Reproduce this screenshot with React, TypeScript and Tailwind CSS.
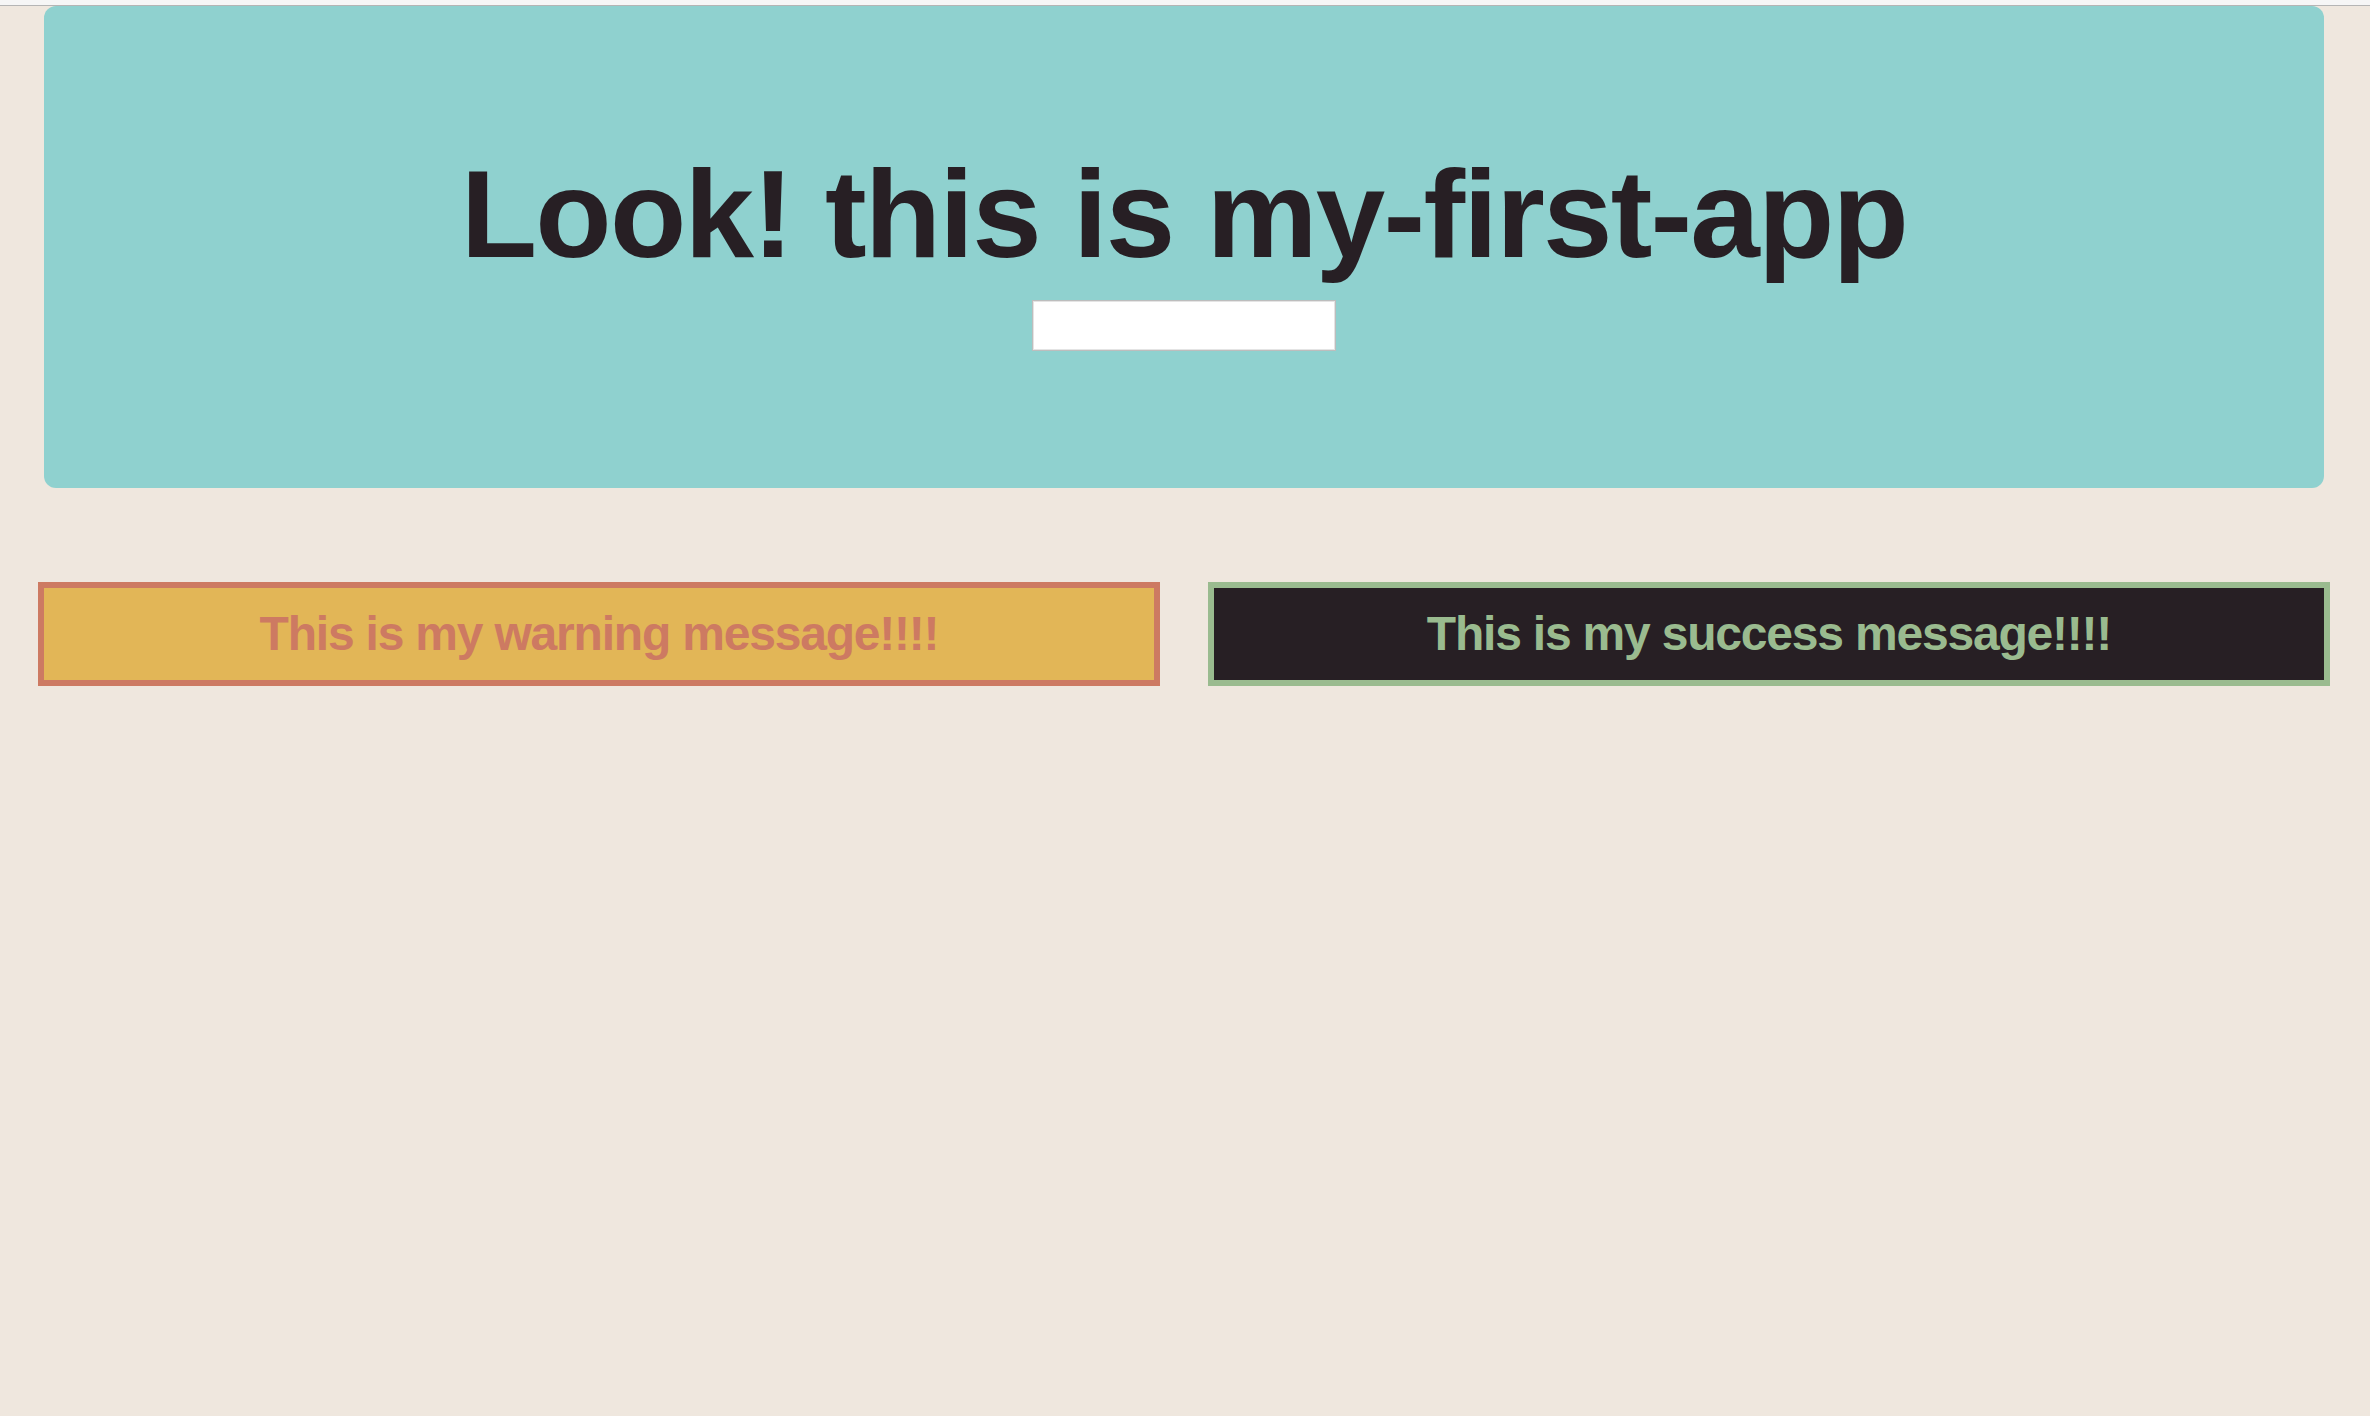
// Simple landing page: header banner with an input and two message boxes
function Message({ kind, children }: { kind: "warning" | "success"; children: string }) {
  const styles =
    kind === "warning"
      ? "bg-[#e2b657] border-[#cd7a62] text-[#cd7a62]"
      : "bg-[#271f24] border-[#9abb8f] text-[#9abb8f]";
  return (
    <div
      className={`flex h-[104px] flex-1 items-center justify-center border-[6px] ${styles}`}
    >
      <p className="text-[48px] font-bold leading-none tracking-[-1.2px]">{children}</p>
    </div>
  );
}

export default function App() {
  return (
    <div
      className="min-h-screen bg-[#efe7de] text-[#271f24]"
      style={{ fontFamily: '"Liberation Sans", Arial, Helvetica, sans-serif' }}
    >
      <div className="h-[6px] border-b border-[#b5b5b5] bg-[#f6f6f6]" />

      <div className="pl-[38px] pr-[40px]">
        {/* Header */}
        <header className="mx-[6px] flex flex-col items-center rounded-[12px] bg-[#8fd1cf] pt-[145px] pb-[137px]">
          <h1 className="text-[125px] font-bold leading-none tracking-[-1.8px]">
            Look! this is my-first-app
          </h1>
          <input
            type="text"
            className="mt-[24px] h-[51px] w-[304px] border border-[#bdbdbd] bg-white shadow-[inset_0_0_0_1px_#e4e4e4] outline-none"
          />
        </header>

        {/* Messages */}
        <div className="mt-[94px] flex gap-[48px]">
          <Message kind="warning">This is my warning message!!!!</Message>
          <Message kind="success">This is my success message!!!!</Message>
        </div>
      </div>
    </div>
  );
}
